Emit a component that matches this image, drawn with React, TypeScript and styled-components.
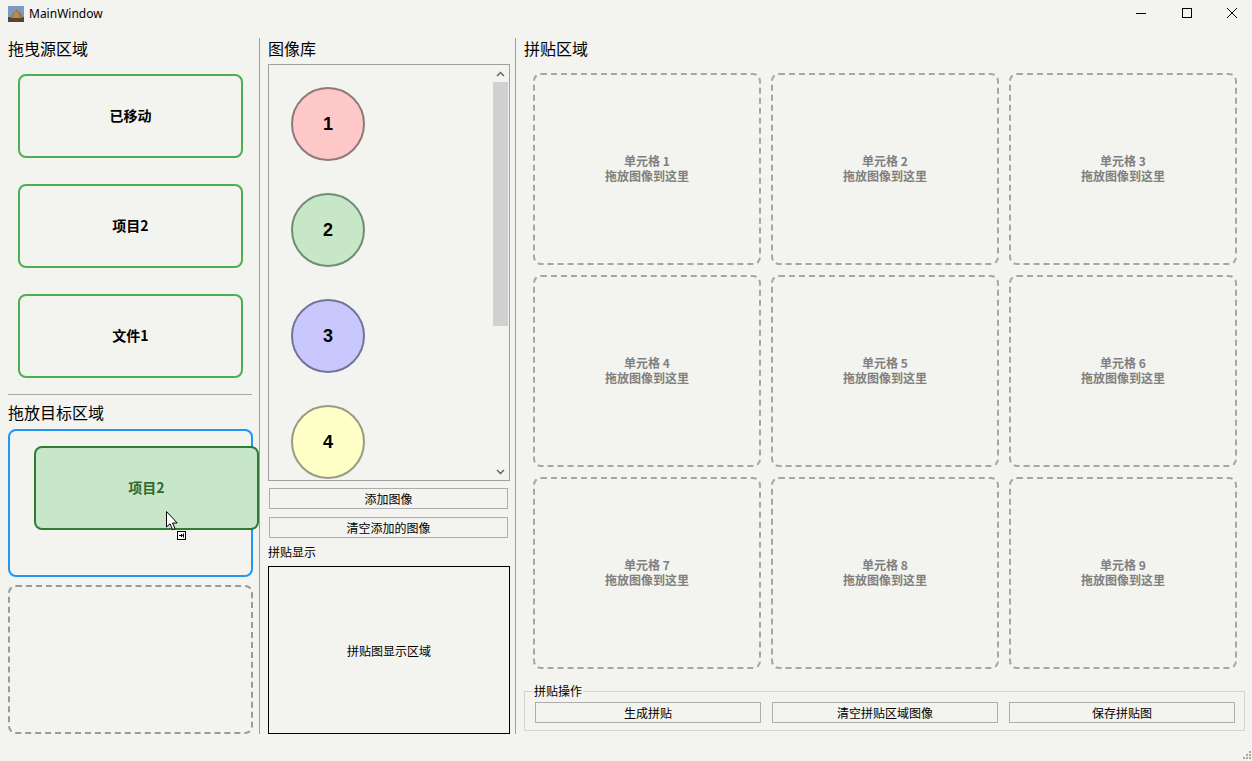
import React from "react";
import styled, { createGlobalStyle } from "styled-components";

const GlobalStyle = createGlobalStyle`
  html, body {
    margin: 0;
    padding: 0;
    background: #f3f3ef;
  }
  body {
    font-family: "Noto Sans CJK SC", "Noto Sans", sans-serif;
    color: #000;
  }
  * {
    box-sizing: border-box;
  }
`;

const sources = ["已移动", "项目2", "文件1"];

const circles = [
  { n: 1, fill: "#ffc8c8", stroke: "#8f7a7a" },
  { n: 2, fill: "#c8e6c8", stroke: "#6f8f6f" },
  { n: 3, fill: "#c8c8ff", stroke: "#74749a" },
  { n: 4, fill: "#ffffc8", stroke: "#9a9a85" },
];

const cells = [1, 2, 3, 4, 5, 6, 7, 8, 9];

function App() {
  return (
    <>
      <GlobalStyle />
      <Window>
        <TitleBar>
          <AppIcon width="16" height="16" viewBox="0 0 16 16">
            <rect width="16" height="16" fill="#7d9ac0" />
            <rect y="11" width="16" height="5" fill="#5a4630" />
            <path d="M2 12 L5 7 L7 6 L8 3 L10 5 L12 6 L14 10 L15 12 Z" fill="#9c7440" />
            <path d="M5 9 L8 5 L11 8 L12 12 L4 12 Z" fill="#b88c4c" />
          </AppIcon>
          <Title>MainWindow</Title>
          <Controls>
            <CtrlButton>
              <svg width="10" height="10" viewBox="0 0 10 10">
                <line x1="0" y1="5.5" x2="10" y2="5.5" stroke="#000" strokeWidth="1" />
              </svg>
            </CtrlButton>
            <CtrlButton>
              <svg width="10" height="10" viewBox="0 0 10 10">
                <rect x="0.5" y="0.5" width="9" height="9" fill="none" stroke="#000" strokeWidth="1" />
              </svg>
            </CtrlButton>
            <CtrlButton>
              <svg width="10" height="10" viewBox="0 0 10 10">
                <path d="M0 0 L10 10 M10 0 L0 10" stroke="#000" strokeWidth="1" />
              </svg>
            </CtrlButton>
          </Controls>
        </TitleBar>

        <Main>
          <LeftPane>
            <Heading>拖曳源区域</Heading>
            <SourceList>
              {sources.map((s) => (
                <SourceItem key={s}>{s}</SourceItem>
              ))}
            </SourceList>
            <HRule />
            <Heading $top={7}>拖放目标区域</Heading>
            <TargetBox $active />
            <TargetBox $grow />
          </LeftPane>

          <VRule />

          <MidPane>
            <Heading>图像库</Heading>
            <ImageList>
              <ImageItems>
                {circles.map((c) => (
                  <ImageRow key={c.n}>
                    <Circle $fill={c.fill} $stroke={c.stroke}>
                      {c.n}
                    </Circle>
                  </ImageRow>
                ))}
              </ImageItems>
              <ScrollBar>
                <ScrollArrow>
                  <svg width="9" height="6" viewBox="0 0 9 6">
                    <path d="M1 5 L4.5 1.5 L8 5" fill="none" stroke="#606060" strokeWidth="1.4" />
                  </svg>
                </ScrollArrow>
                <Thumb />
                <ScrollSpacer />
                <ScrollArrow>
                  <svg width="9" height="6" viewBox="0 0 9 6">
                    <path d="M1 1 L4.5 4.5 L8 1" fill="none" stroke="#606060" strokeWidth="1.4" />
                  </svg>
                </ScrollArrow>
              </ScrollBar>
            </ImageList>
            <FlatButton $top={7}>添加图像</FlatButton>
            <FlatButton $top={8}>清空添加的图像</FlatButton>
            <SmallLabel>拼贴显示</SmallLabel>
            <DisplayBox>拼贴图显示区域</DisplayBox>
          </MidPane>

          <VRule />

          <RightPane>
            <Heading>拼贴区域</Heading>
            <Grid>
              {cells.map((n) => (
                <Cell key={n}>
                  <strong>单元格 {n}</strong>
                  <span>拖放图像到这里</span>
                </Cell>
              ))}
            </Grid>
            <GroupBox>
              <GroupTitle>拼贴操作</GroupTitle>
              <FlatButton>生成拼贴</FlatButton>
              <FlatButton>清空拼贴区域图像</FlatButton>
              <FlatButton>保存拼贴图</FlatButton>
            </GroupBox>
          </RightPane>
        </Main>

        <DragGhost>项目2</DragGhost>
        <Cursor width="22" height="32" viewBox="0 0 22 32">
          <path
            d="M0.5 0.5 L0.5 16 L4 12.8 L6.6 18.6 L9 17.6 L6.5 12 L11.2 12 Z"
            fill="#fff"
            stroke="#000"
            strokeWidth="1"
            strokeLinejoin="round"
          />
          <rect x="11.5" y="20.5" width="8" height="8" fill="#fff" stroke="#000" strokeWidth="1" />
          <path d="M13 24.5 L16.5 24.5 M15 23 L16.5 24.5 L15 26 M17.5 22.5 L17.5 26.5" stroke="#000" strokeWidth="1" fill="none" />
        </Cursor>
        <Grip width="10" height="10" viewBox="0 0 10 10">
          {[
            [8, 2],
            [8, 5],
            [5, 5],
            [8, 8],
            [5, 8],
            [2, 8],
          ].map(([x, y]) => (
            <rect key={`${x}-${y}`} x={x} y={y} width="2" height="2" fill="#a8a8a8" />
          ))}
        </Grip>
      </Window>
    </>
  );
}

const Window = styled.div`
  position: relative;
  width: 1252px;
  height: 761px;
  overflow: hidden;
  background: #f3f3ef;
`;

const TitleBar = styled.div`
  display: flex;
  align-items: center;
  height: 28px;
  padding-left: 8px;
`;

const AppIcon = styled.svg`
  display: block;
  margin-top: -1px;
`;

const Title = styled.span`
  margin-left: 5px;
  font-family: "Noto Sans", "Open Sans", sans-serif;
  font-size: 12px;
  line-height: 28px;
  color: #000;
`;

const Controls = styled.div`
  display: flex;
  margin-left: auto;
  margin-right: -3px;
  height: 100%;
`;

const CtrlButton = styled.div`
  width: 45.5px;
  display: flex;
  align-items: center;
  justify-content: center;
  padding-bottom: 3px;
`;

const Main = styled.div`
  display: flex;
  height: 733px;
  padding: 10px 0 27px;
`;

const LeftPane = styled.div`
  display: flex;
  flex-direction: column;
  width: 253px;
  padding-left: 8px;
  margin-right: 6px;
`;

const MidPane = styled.div`
  display: flex;
  flex-direction: column;
  width: 250px;
  padding-left: 8px;
  margin-right: 5px;
`;

const RightPane = styled.div`
  display: flex;
  flex-direction: column;
  width: 729px;
  padding-left: 8px;
`;

const Heading = styled.div<{ $top?: number }>`
  margin-top: ${(p) => p.$top ?? 0}px;
  height: 20px;
  font-size: 16px;
  line-height: 20px;
  color: #000;
`;

const VRule = styled.div`
  width: 1px;
  background: #a0a0a0;
  align-self: stretch;
`;

const HRule = styled.div`
  height: 1px;
  margin-top: 16px;
  width: 244px;
  background: #a8a8a8;
`;

const SourceList = styled.div`
  display: flex;
  flex-direction: column;
  gap: 26px;
  margin-top: 16px;
  padding-left: 10px;
`;

const SourceItem = styled.div`
  width: 225px;
  height: 84px;
  padding-bottom: 2px;
  border: 2px solid #4caf50;
  border-radius: 8px;
  display: flex;
  align-items: center;
  justify-content: center;
  font-size: 14px;
  font-weight: 700;
  color: #000;
`;

const TargetBox = styled.div<{ $active?: boolean; $grow?: boolean }>`
  margin-top: ${(p) => (p.$active ? 7 : 8)}px;
  height: 148px;
  flex: ${(p) => (p.$grow ? 1 : "none")};
  border: 2px ${(p) => (p.$active ? "solid #2196f3" : "dashed #9a9a9a")};
  border-radius: 8px;
`;

const DragGhost = styled.div`
  position: absolute;
  left: 34px;
  top: 446px;
  width: 225px;
  height: 84px;
  padding-bottom: 2px;
  background: #c8e6c9;
  border: 2px solid #2e7d32;
  border-radius: 8px;
  display: flex;
  align-items: center;
  justify-content: center;
  font-size: 14px;
  font-weight: 700;
  color: #2e6b30;
`;

const Cursor = styled.svg`
  position: absolute;
  left: 166px;
  top: 511px;
`;

const Grip = styled.svg`
  position: absolute;
  right: 1px;
  bottom: 2px;
`;

const ImageList = styled.div`
  display: flex;
  margin-top: 6px;
  width: 242px;
  height: 417px;
  border: 1px solid #a0a0a0;
  overflow: hidden;
`;

const ImageItems = styled.div`
  flex: 1;
  display: flex;
  flex-direction: column;
  padding-top: 6px;
`;

const ImageRow = styled.div`
  flex: none;
  height: 106px;
  display: flex;
  align-items: center;
  padding-left: 22px;
`;

const Circle = styled.div<{ $fill: string; $stroke: string }>`
  width: 74px;
  height: 74px;
  border-radius: 50%;
  background: ${(p) => p.$fill};
  border: 2px solid ${(p) => p.$stroke};
  display: flex;
  align-items: center;
  justify-content: center;
  font-family: "Liberation Sans", Arial, sans-serif;
  font-size: 18px;
  font-weight: 700;
  color: #000;
`;

const ScrollBar = styled.div`
  width: 15px;
  margin-right: 1px;
  display: flex;
  flex-direction: column;
`;

const ScrollArrow = styled.div`
  height: 17px;
  display: flex;
  align-items: center;
  justify-content: center;
`;

const Thumb = styled.div`
  height: 244px;
  background: #d0d0d0;
`;

const ScrollSpacer = styled.div`
  flex: 1;
`;

const FlatButton = styled.div<{ $top?: number }>`
  margin-top: ${(p) => p.$top ?? 0}px;
  margin-left: ${(p) => (p.$top ? 1 : 0)}px;
  width: ${(p) => (p.$top ? "239px" : "auto")};
  height: 21px;
  border: 1px solid #adadad;
  display: flex;
  align-items: center;
  justify-content: center;
  font-size: 12px;
  color: #000;
`;

const SmallLabel = styled.div`
  margin-top: 5px;
  height: 17px;
  font-size: 12px;
  line-height: 17px;
`;

const DisplayBox = styled.div`
  margin-top: 6px;
  flex: 1;
  width: 242px;
  border: 1px solid #000;
  display: flex;
  align-items: center;
  justify-content: center;
  font-size: 12px;
`;

const Grid = styled.div`
  display: grid;
  grid-template-columns: repeat(3, 228px);
  grid-template-rows: repeat(3, 192px);
  gap: 10px;
  margin-top: 15px;
  margin-left: 9px;
`;

const Cell = styled.div`
  border: 2px dashed #a8a5a6;
  border-radius: 8px;
  padding-bottom: 2px;
  display: flex;
  flex-direction: column;
  align-items: center;
  justify-content: center;
  font-size: 12px;
  line-height: 15px;
  font-weight: 700;
  color: #808080;

  strong,
  span {
    font-weight: 700;
  }
`;

const GroupBox = styled.div`
  position: relative;
  margin-top: 22px;
  width: 721px;
  height: 40px;
  border: 1px solid #d4d4d0;
  padding: 10px 9px 0 10px;
  display: grid;
  grid-template-columns: repeat(3, 226px);
  column-gap: 11px;
  align-content: start;
`;

const GroupTitle = styled.span`
  position: absolute;
  left: 8px;
  top: -8px;
  padding: 0 1px;
  font-size: 12px;
  line-height: 14px;
  background: #f3f3ef;
`;

export default App;
